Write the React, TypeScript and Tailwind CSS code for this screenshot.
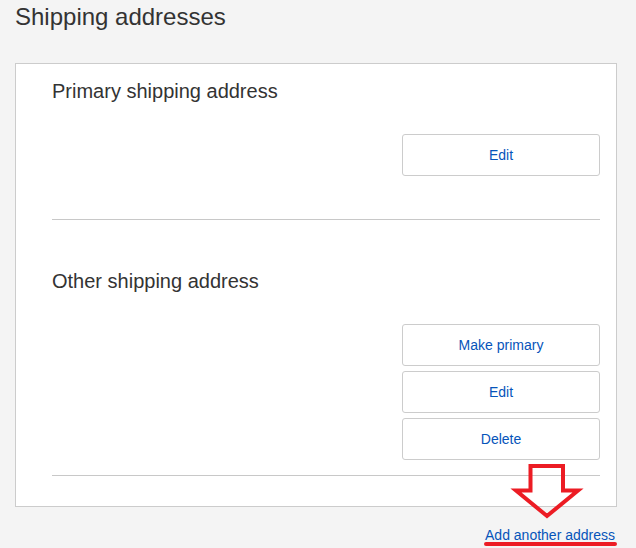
const AddressButton = ({ label }: { label: string }) => (
  <button className="h-[42px] w-[198px] rounded-[3px] border border-[#ccc] bg-white text-[14px] text-[#0654ba]">
    {label}
  </button>
);

const App = () => {
  return (
    <div className="relative min-h-screen bg-[#f4f4f4] pl-[15px] pr-[19px] font-['Liberation_Sans',Arial,sans-serif] text-[#333]">
      <h1 className="pt-[3px] text-[24px] leading-[28px]">Shipping addresses</h1>

      <div className="mt-[32px] border border-[#ccc] bg-white pl-[36px] pr-[16px] pt-[15px] pb-[30px]">
        {/* Primary */}
        <section>
          <h2 className="text-[20px] leading-[24px]">Primary shipping address</h2>
          <div className="mt-[31px] flex flex-col items-end">
            <AddressButton label="Edit" />
          </div>
          <div className="mt-[43px] h-px bg-[#c8c8c8]" />
        </section>

        {/* Other */}
        <section className="pt-[49px]">
          <h2 className="text-[20px] leading-[24px]">Other shipping address</h2>
          <div className="mt-[31px] flex flex-col items-end gap-[5px]">
            <AddressButton label="Make primary" />
            <AddressButton label="Edit" />
            <AddressButton label="Delete" />
          </div>
          <div className="mt-[15px] h-px bg-[#c8c8c8]" />
        </section>
      </div>

      <div className="mt-[18px] flex justify-end pr-[2px]">
        <a href="#" className="relative text-[14px] leading-[20px] text-[#0654ba]">
          Add another address
          <span className="absolute left-[-1px] right-[-2px] top-[17px] h-[4px] rounded-full bg-[#ec1c24]" />
        </a>
      </div>

      {/* annotation arrow */}
      <svg className="absolute left-[510px] top-[460px]" width="76" height="62" viewBox="510 460 76 62" fill="none">
        <path
          d="M530.5 466 H563 V490.5 H578 L547 516 L516 490.5 H530.5 Z"
          stroke="#ec1c24"
          strokeWidth="4"
          strokeLinejoin="miter"
        />
      </svg>
    </div>
  );
};

export default App;
